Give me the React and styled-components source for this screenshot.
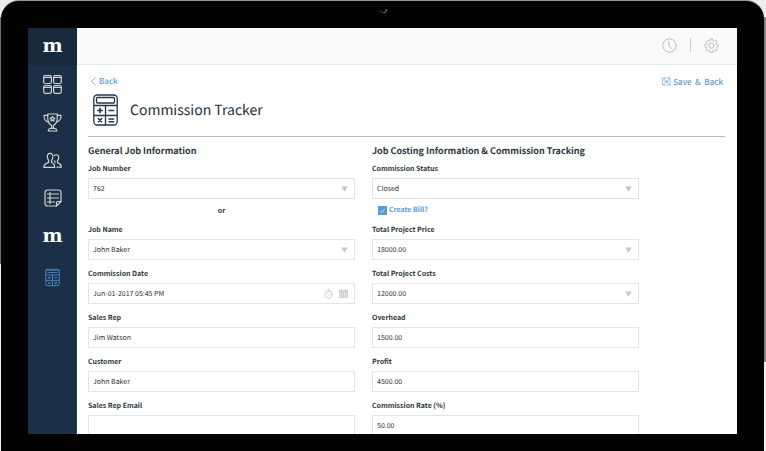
import React from "react";
import styled, { createGlobalStyle, css } from "styled-components";

const GlobalStyle = createGlobalStyle`
  * {
    box-sizing: border-box;
  }
  body {
    margin: 0;
    background:
      linear-gradient(#ececec 17px, #6d7172 17px, #6d7172 264px, #f2f2f3 264px) left / 50% 100% no-repeat,
      linear-gradient(#ececec 17px, #808283 17px, #808283 362px, #f2f2f3 362px) right / 50% 100% no-repeat;
    font-family: "Noto Sans CJK SC", "Noto Sans", sans-serif;
    color: #2b3640;
    text-rendering: geometricPrecision;
  }
`;

const Page = styled.div`
  height: 100vh;
  padding: 1px 2px 0 1px;
`;

const Bezel = styled.div`
  position: relative;
  height: 100%;
  padding: 27px 27px 17px;
  background: #030303;
  border-radius: 18px 18px 0 0;
  box-shadow: 0 -1px #939796;
`;

const Camera = styled.svg`
  position: absolute;
  top: 6px;
  left: 50%;
  margin-left: -3px;
`;

const Screen = styled.div`
  display: flex;
  height: 100%;
  overflow: hidden;
  background: #fff;
`;

const Sidebar = styled.nav`
  display: flex;
  flex-direction: column;
  flex: none;
  width: 49px;
  background: #1b2f47;
  box-shadow: inset -1px 0 #1f3d60;
`;

const logoStyle = css`
  color: #fff;
  font-family: "DejaVu Serif", serif;
  font-size: 19px;
  font-weight: bold;
  line-height: 20px;
`;

const Logo = styled.a`
  display: flex;
  align-items: center;
  justify-content: center;
  height: 37px;
  padding-bottom: 2px;
  background: #18293b;
  text-decoration: none;
  ${logoStyle}
`;

const NavItem = styled.a`
  display: flex;
  align-items: center;
  justify-content: center;
  height: 38px;
  color: ${(props) => (props.$active ? "#4a86c2" : "#d3d4d2")};
  text-decoration: none;
  margin-top: ${(props) => (props.$active ? "3px" : "0")};
`;

const NavLetter = styled.span`
  ${logoStyle}
`;

const Main = styled.main`
  flex: 1;
  min-width: 0;
`;

const TopBar = styled.header`
  display: flex;
  align-items: center;
  justify-content: flex-end;
  gap: 13px;
  height: 37px;
  padding: 0 18px 2px;
  background: #f9fafc;
  border-bottom: 1px solid #e2eaf1;
`;

const IconButton = styled.button`
  display: flex;
  padding: 0;
  border: none;
  background: none;
  color: #b9bcbd;
  cursor: pointer;
`;

const Divider = styled.span`
  width: 1px;
  height: 14px;
  background: #c8cbcc;
`;

const Content = styled.div`
  padding: 9px 12px 0 11px;
`;

const Actions = styled.div`
  display: flex;
  justify-content: space-between;
  height: 16px;
  padding: 0 2px;
`;

const linkStyle = css`
  display: flex;
  align-items: center;
  gap: 2px;
  height: 15px;
  color: #5b9bd5;
  font-size: 8px;
  font-weight: 500;
  line-height: 16px;
`;

const BackLink = styled.a`
  ${linkStyle}
  text-decoration: none;
`;

const SaveButton = styled.button`
  ${linkStyle}
  padding: 0;
  border: none;
  background: none;
  font-family: inherit;
  white-space: pre;
  cursor: pointer;
`;

const TitleRow = styled.div`
  display: flex;
  align-items: center;
  gap: 12px;
  padding: 4px 0 10px 5px;
  border-bottom: 1px solid #b5bbbc;
`;

const Title = styled.h1`
  margin: 0;
  color: #22303d;
  font-size: 14px;
  font-weight: 400;
  line-height: 24px;
`;

const Columns = styled.div`
  display: grid;
  grid-template-columns: 1fr 1fr;
  gap: 17px;
  padding: 5px 86px 0 0;
`;

const Column = styled.section`
  display: flex;
  flex-direction: column;
  gap: 5px;
  min-width: 0;
`;

const SectionTitle = styled.h2`
  height: 13px;
  margin: 0;
  font-size: 9px;
  font-weight: 700;
  line-height: 18px;
`;

const FieldGroup = styled.div`
  display: flex;
  flex-direction: column;
`;

const Label = styled.label`
  font-size: 7px;
  font-weight: 700;
  line-height: 18px;
`;

const Control = styled.div`
  position: relative;
  height: 21px;
`;

const boxStyle = css`
  display: block;
  width: 100%;
  height: 21px;
  padding: 0 4px;
  border: 1px solid #e1e5e6;
  border-radius: 0;
  background: #fff;
  color: #2b3640;
  font-family: inherit;
  font-size: 7px;
  line-height: 16px;
  text-rendering: inherit;
`;

const Input = styled.input`
  ${boxStyle}
`;

const Select = styled.select`
  ${boxStyle}
  appearance: none;
`;

const Adornment = styled.span`
  position: absolute;
  top: 0;
  right: 7px;
  display: flex;
  align-items: center;
  gap: 6px;
  height: 100%;
  color: #c2c7c9;
  pointer-events: none;
`;

const BetweenRow = styled.div`
  display: flex;
  align-items: center;
  justify-content: ${(props) => (props.$center ? "center" : "flex-start")};
  height: 12px;
  padding: ${(props) => (props.$center ? "2px 0 0" : "0 0 0 6px")};
  font-size: 7px;
  font-weight: 700;
  line-height: 12px;
`;

const CheckLabel = styled.label`
  display: flex;
  align-items: center;
  gap: 2px;
  color: #5b9bd5;
`;

const CheckBox = styled.span`
  position: relative;
  display: flex;
  width: 9px;
  height: 9px;
`;

const CheckInput = styled.input`
  appearance: none;
  width: 9px;
  height: 9px;
  margin: 0;
  border: 1px solid #5b9bd5;
  &:checked {
    background: #5b9bd5;
  }
`;

const CheckMark = styled.svg`
  position: absolute;
  inset: 0;
  pointer-events: none;
`;

const Stroke = ({ size, height, box, width = 1, children }) => (
  <svg
    width={size}
    height={height || size}
    viewBox={box || `0 0 ${size} ${height || size}`}
    fill="none"
    stroke="currentColor"
    strokeWidth={width}
    strokeLinecap="round"
    strokeLinejoin="round"
    aria-hidden="true"
  >
    {children}
  </svg>
);

const TilesIcon = () => (
  <Stroke size={19} width={1.2}>
    {[
      [0.7, 0.7],
      [10.6, 0.7],
      [0.7, 10.5],
      [10.6, 10.5],
    ].map(([x, y]) => (
      <g key={`${x}-${y}`}>
        <rect x={x} y={y} width="7.700" height="7.800" rx="1.500" />
        <path d={`M${x} ${y + 1.8}h7.700`} />
      </g>
    ))}
  </Stroke>
);

const TrophyIcon = () => (
  <Stroke size={19} box="0 0 20 20" width={1.2}>
    <path d="M5 1h10v4c0 4-1.500 7-4 8v3h-2v-3c-2.500-1-4-4-4-8z" />
    <path d="M5 2.500H1c0 4.500 2 6.500 5.200 7M15 2.500h4c0 4.500-2 6.500-5.200 7" />
    <path d="M5.500 19c0-2 1.500-3 3.500-3h2c2 0 3.500 1 3.500 3z" />
    <path d="M10 3.600l.8 1.500 1.700.3-1.200 1.200.2 1.700-1.500-.8-1.500.8.2-1.700-1.200-1.200 1.700-.3z" />
  </Stroke>
);

const PeopleIcon = () => (
  <Stroke size={19} height={17} box="0 0 20 17" width={1.2}>
    <path d="M7.500 1C5.400 1 4.400 2.600 4.600 4.700c.1 1.900.7 3 1.400 3.800v2c-2.500 1-5.200 1.700-5.200 5.300h11.600c0-3.600-1.200-4.300-3.400-5.300v-2c.8-.8 1.300-1.900 1.400-3.800C10.600 2.600 9.600 1 7.500 1z" />
    <path d="M12 3.300c.5-.6 1.100-.9 1.900-.9 1.900 0 2.800 1.400 2.600 3.300-.1 1.500-.6 2.600-1.300 3.200v1.800c2.200.8 4.200 1.500 4.200 4.800h-4.700M12 8.800l.6.600v1.500" />
  </Stroke>
);

const ListIcon = () => (
  <Stroke size={18} width={1.2}>
    <path d="M12.500 17H3.500A2.500 2.500 0 0 1 1 14.500v-11A2.500 2.500 0 0 1 3.500 1h11A2.500 2.500 0 0 1 17 3.500v9z" />
    <path d="M12.500 17v-3.500a1 1 0 0 1 1-1H17" />
    <path d="M3.500 5h11M3.500 9h11M3.500 13h7M6 3.500v11" />
  </Stroke>
);

const SmallCalcIcon = () => (
  <Stroke size={15} height={19} box="0 0 16 19">
    <rect x=".8" y=".8" width="14.400" height="17.400" rx="1.500" />
    <path d="M1 1.700h14M3 4.200h10M1 6.800h14M1 12.500h14M8 7v11M3.500 9.700h2M4.500 8.700v2M10.500 9.700h2M3.700 14.500l1.600 1.600M5.300 14.500l-1.600 1.600M10.500 14.500h2M10.500 16.200h2" />
  </Stroke>
);

const CalcIcon = () => (
  <svg
    width="25"
    height="32"
    viewBox="0 0 25 32"
    fill="none"
    stroke="#22354b"
    strokeWidth="1.300"
    aria-hidden="true"
  >
    <rect x=".8" y="1" width="23.400" height="30" rx="3.500" />
    <rect x="3.500" y="3.500" width="18" height="5.500" rx="1" />
    <path d="M1 11.500h23M1 21.500h23M12.500 11.500V31" />
    <path
      strokeWidth="1.600"
      d="M4.200 16.500h5.600M7 13.700v5.600M15.500 16.500h5.600M5 24.300l4 4M9 24.300l-4 4M15.500 25h5.600M15.500 27.800h5.600"
    />
  </svg>
);

const ClockIcon = () => (
  <Stroke size={15}>
    <circle cx="7.500" cy="7.500" r="6.700" />
    <path d="M7 3.500v4.300l3 3" />
  </Stroke>
);

const GearIcon = () => (
  <Stroke size={15}>
    <path d="M6.500.8h2l.4 1.800 1.300.5 1.500-1 1.500 1.500-1 1.500.5 1.300 1.700.3v2l-1.700.4-.5 1.300 1 1.500-1.500 1.500-1.500-1-1.300.5-.4 1.700h-2l-.4-1.700-1.300-.5-1.500 1-1.500-1.500 1-1.500-.5-1.300L.8 8.700v-2l1.800-.3.500-1.300-1-1.500 1.500-1.500 1.500 1 1.300-.5z" />
    <circle cx="7.500" cy="7.600" r="2.600" />
  </Stroke>
);

const BackIcon = () => (
  <Stroke size={7} height={9} width={0.7}>
    <path d="M5.500.8L1.200 4.500l4.300 3.700" />
  </Stroke>
);

const SaveIcon = () => (
  <Stroke size={9} box="0 0 10 10" width={0.6}>
    <path d="M1 1h8v8H1zM2.500 1v3l1 1h3l1-1V1M1 9l3-3M9 9L6 6" />
    <circle cx="5" cy="5" r="1.200" />
  </Stroke>
);

const ArrowIcon = () => (
  <svg width="7" height="6" viewBox="0 0 7 6" aria-hidden="true">
    <path d="M.3.500h6.400L3.500 5.700z" fill="#c2c7c9" />
  </svg>
);

const StopwatchIcon = () => (
  <Stroke size={9} height={10} width={0.8}>
    <circle cx="4.500" cy="5.600" r="3.600" />
    <path d="M3.500.8h2M4.500.8V2M4.500 5.600L3 4.200M7.600 2l.6.600" />
  </Stroke>
);

const CalendarIcon = () => (
  <Stroke size={9} width={0.8}>
    <path
      d="M.6 1.500h7.800v7H.6zM.6 3.500h7.800M.6 5.200h7.800M.6 6.900h7.800M2.500 3.500v5M4.500 3.500v5M6.500 3.500v5M2.500.5v1.500M6.500.5v1.500"
    />
    <path d="M.6 2.300h7.800" />
  </Stroke>
);

const navItems = [
  { label: "Dashboard", icon: <TilesIcon /> },
  { label: "Goals", icon: <TrophyIcon /> },
  { label: "Contacts", icon: <PeopleIcon /> },
  { label: "Lists", icon: <ListIcon /> },
  { label: "Home", icon: <NavLetter>m</NavLetter> },
  { label: "Calculator", icon: <SmallCalcIcon />, active: true },
];

const Field = ({ id, label, value, type }) => (
  <FieldGroup>
    <Label htmlFor={id}>{label}</Label>
    <Control>
      {type === "select" ? (
        <Select id={id} defaultValue={value}>
          <option>{value}</option>
        </Select>
      ) : (
        <Input id={id} type="text" defaultValue={value} />
      )}
      {type === "select" && (
        <Adornment>
          <ArrowIcon />
        </Adornment>
      )}
      {type === "date" && (
        <Adornment>
          <StopwatchIcon />
          <CalendarIcon />
        </Adornment>
      )}
    </Control>
  </FieldGroup>
);

const App = () => (
  <Page>
    <GlobalStyle />
    <Bezel>
      <Camera width="7" height="7" viewBox="0 0 7 7" aria-hidden="true">
        <path d="M.5 3a3 3 0 0 0 3 3" fill="none" stroke="#22364d" />
        <path d="M3.500 5.800A2.600 2.600 0 0 0 6 2" fill="none" stroke="#8a97a5" />
      </Camera>
      <Screen>
        <Sidebar>
          <Logo href="#home">m</Logo>
          {navItems.map((item) => (
            <NavItem
              key={item.label}
              href="#nav"
              aria-label={item.label}
              $active={item.active}
            >
              {item.icon}
            </NavItem>
          ))}
        </Sidebar>
        <Main>
          <TopBar>
            <IconButton type="button" aria-label="History">
              <ClockIcon />
            </IconButton>
            <Divider />
            <IconButton type="button" aria-label="Settings">
              <GearIcon />
            </IconButton>
          </TopBar>
          <Content>
            <Actions>
              <BackLink href="#back">
                <BackIcon />
                Back
              </BackLink>
              <SaveButton type="button">
                <SaveIcon />
                {"Save  &  Back"}
              </SaveButton>
            </Actions>
            <TitleRow>
              <CalcIcon />
              <Title>Commission Tracker</Title>
            </TitleRow>
            <Columns>
              <Column>
                <SectionTitle>General Job Information</SectionTitle>
                <Field id="number" label="Job Number" value="762" type="select" />
                <BetweenRow $center>or</BetweenRow>
                <Field id="name" label="Job Name" value="John Baker" type="select" />
                <Field
                  id="date"
                  label="Commission Date"
                  value="Jun-01-2017 05:45 PM"
                  type="date"
                />
                <Field id="rep" label="Sales Rep" value="Jim Watson" />
                <Field id="customer" label="Customer" value="John Baker" />
                <Field id="email" label="Sales Rep Email" value="" />
              </Column>
              <Column>
                <SectionTitle>
                  Job Costing Information & Commission Tracking
                </SectionTitle>
                <Field
                  id="status"
                  label="Commission Status"
                  value="Closed"
                  type="select"
                />
                <BetweenRow>
                  <CheckLabel>
                    <CheckBox>
                      <CheckInput type="checkbox" defaultChecked />
                      <CheckMark viewBox="0 0 8 8" aria-hidden="true">
                        <path d="M2 4.500l1.300 1.200L6 2.500" fill="none" stroke="#d5e6f5" strokeWidth=".8" />
                      </CheckMark>
                    </CheckBox>
                    Create Bill?
                  </CheckLabel>
                </BetweenRow>
                <Field
                  id="price"
                  label="Total Project Price"
                  value="18000.00"
                  type="select"
                />
                <Field
                  id="costs"
                  label="Total Project Costs"
                  value="12000.00"
                  type="select"
                />
                <Field id="overhead" label="Overhead" value="1500.00" />
                <Field id="profit" label="Profit" value="4500.00" />
                <Field id="rate" label="Commission Rate (%)" value="50.00" />
              </Column>
            </Columns>
          </Content>
        </Main>
      </Screen>
    </Bezel>
  </Page>
);

export default App;
